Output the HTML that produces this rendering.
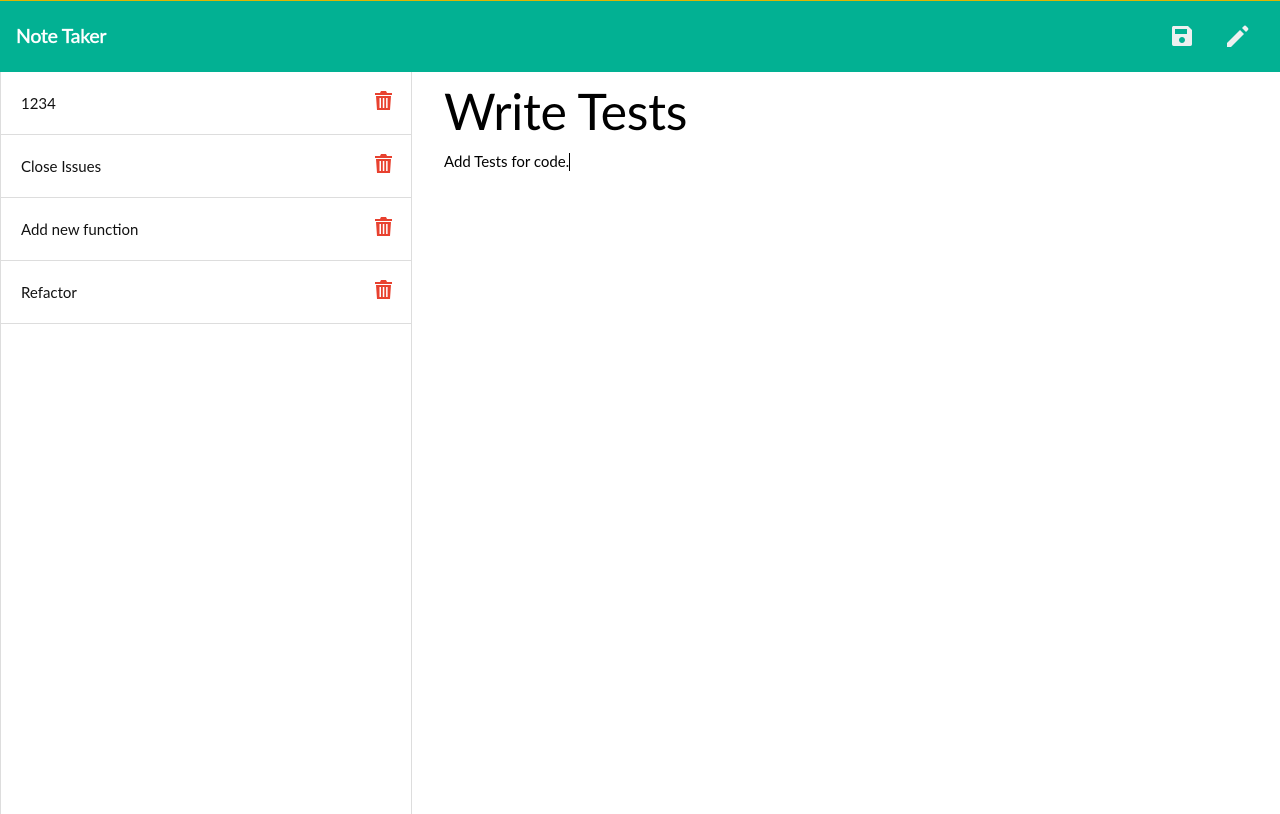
<!DOCTYPE html>
<html><head><style>
body{margin:0;width:1280px;height:814px;overflow:hidden;font-family:"Lato","Liberation Sans",sans-serif;background:#fff}
.nav{position:absolute;top:0;left:0;width:1280px;height:72px;background:#02b193;border-top:1px solid #e0b500;box-sizing:border-box}
.nav .t{position:absolute;left:16px;top:24px;color:#fff;font-size:19.5px;font-weight:500;letter-spacing:-0.3px;-webkit-text-stroke:0.3px #fff}
.side{position:absolute;top:72px;left:0;width:410px;height:742px;border-left:1px solid #ddd;border-right:1px solid #ddd}
.item{height:62px;border-bottom:1px solid #ddd;position:relative;font-size:15px;color:#111}
.item span{position:absolute;left:20px;top:23px}
.item svg{position:absolute;left:374px;top:19px}
h1{position:absolute;left:444px;top:81px;margin:0;font-weight:400;font-size:50px;color:#000;letter-spacing:-0.3px}
.body{position:absolute;left:444px;top:153px;font-size:15px;color:#000}
.cur{display:inline-block;width:1px;height:18px;background:#000;vertical-align:-4px}
</style></head><body>
<div class="nav"><div class="t">Note Taker</div>
<svg style="position:absolute;left:1171px;top:24px" width="22" height="22" viewBox="0 0 22 22"><path fill="#eef0f0" d="M2 1h15l4 4v14a2 2 0 0 1-2 2H3a2 2 0 0 1-2-2V3a2 2 0 0 1 1-2zM4 4v5h12V4zm7 8a3 3 0 1 0 0 6a3 3 0 0 0 0-6z"/></svg>
<svg style="position:absolute;left:1224px;top:23px" width="26" height="26" viewBox="0 0 26 26"><path fill="#eef0f0" d="M3 19L16 6l4 4L7 23H3zM18 4l2-2a1.5 1.5 0 0 1 2 0l2 2a1.5 1.5 0 0 1 0 2l-2 2z"/></svg>
</div>
<div class="side">
<div class="item"><span>1234</span><svg width="17" height="20" viewBox="0 0 17 20"><path fill="#e8412f" d="M6 0h5l1 2h5v2H0V2h5zM1 5h15l-1 14H2zm3.5 2v10h1.5V7zm3.3 0v10h1.5V7zm3.3 0v10h1.5V7z"/></svg></div>
<div class="item"><span>Close Issues</span><svg width="17" height="20" viewBox="0 0 17 20"><path fill="#e8412f" d="M6 0h5l1 2h5v2H0V2h5zM1 5h15l-1 14H2zm3.5 2v10h1.5V7zm3.3 0v10h1.5V7zm3.3 0v10h1.5V7z"/></svg></div>
<div class="item"><span>Add new function</span><svg width="17" height="20" viewBox="0 0 17 20"><path fill="#e8412f" d="M6 0h5l1 2h5v2H0V2h5zM1 5h15l-1 14H2zm3.5 2v10h1.5V7zm3.3 0v10h1.5V7zm3.3 0v10h1.5V7z"/></svg></div>
<div class="item"><span>Refactor</span><svg width="17" height="20" viewBox="0 0 17 20"><path fill="#e8412f" d="M6 0h5l1 2h5v2H0V2h5zM1 5h15l-1 14H2zm3.5 2v10h1.5V7zm3.3 0v10h1.5V7zm3.3 0v10h1.5V7z"/></svg></div>
</div>
<h1>Write Tests</h1>
<div class="body">Add Tests for code.<span class="cur"></span></div>
</body></html>
